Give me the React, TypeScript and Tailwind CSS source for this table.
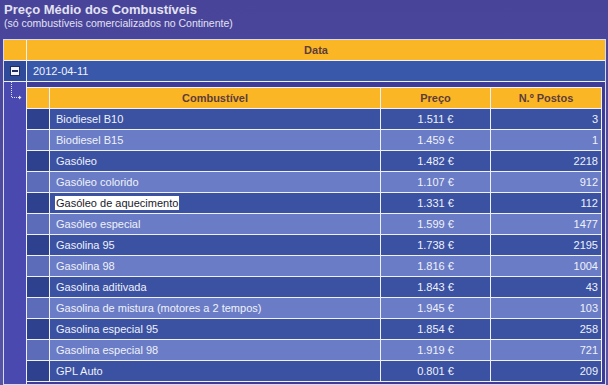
const fuels: [string, string, number][] = [
  ["Biodiesel B10", "1.511 €", 3],
  ["Biodiesel B15", "1.459 €", 1],
  ["Gasóleo", "1.482 €", 2218],
  ["Gasóleo colorido", "1.107 €", 912],
  ["Gasóleo de aquecimento", "1.331 €", 112],
  ["Gasóleo especial", "1.599 €", 1477],
  ["Gasolina 95", "1.738 €", 2195],
  ["Gasolina 98", "1.816 €", 1004],
  ["Gasolina aditivada", "1.843 €", 43],
  ["Gasolina de mistura (motores a 2 tempos)", "1.945 €", 103],
  ["Gasolina especial 95", "1.854 €", 258],
  ["Gasolina especial 98", "1.919 €", 721],
  ["GPL Auto", "0.801 €", 209],
];

function TreeLink() {
  return (
    <svg width="22" height="24" viewBox="0 0 22 24" className="block">
      <path d="M7.5 0V15.5H15" stroke="#dfe2f4" strokeWidth="1" strokeDasharray="1 1" fill="none" />
      <path d="M15 13.5L17.5 15.5L15 17.5Z" fill="#dfe2f4" />
    </svg>
  );
}

function MinusBox() {
  return (
    <div className="w-[10px] h-[10px] bg-[#f4f4f8] border border-[#1e2c66] flex items-center justify-center">
      <div className="w-[6px] h-[2px] bg-[#1e2c66]" />
    </div>
  );
}

export default function App() {
  return (
    <div
      className="w-[608px] h-[385px] overflow-hidden bg-gradient-to-b from-[#48449a] to-[#5654a6] text-[11px]"
      style={{ fontFamily: '"Liberation Sans", Arial, sans-serif' }}
    >
      {/* heading */}
      <div className="h-[39px] pl-[4px] pt-[2px] text-[#e2e2f0]">
        <div className="text-[13px] font-bold leading-[15px]">Preço Médio dos Combustíveis</div>
        <div className="text-[10.5px] leading-[12px]">(só combustíveis comercializados no Continente)</div>
      </div>

      {/* outer grid */}
      <div className="ml-[3px] w-[603px] border border-[#d6daf0] bg-[#3e3c96]">
        <div className="flex h-[21px] border-b border-[#eef0fa] bg-[#fbb626]">
          <div className="w-[23px] border-r border-[#eef0fa]" />
          <div className="flex-1 flex items-center justify-center font-bold text-[#5e3d3a]">Data</div>
        </div>

        <div className="flex h-[21px] border-b border-[#eef0fa] bg-[#3a58aa] text-[#eef2fa]">
          <div className="w-[23px] border-r border-[#eef0fa] bg-[#2f4a98] flex items-center justify-center">
            <MinusBox />
          </div>
          <div className="flex-1 flex items-center pl-[6px]">2012-04-11</div>
        </div>

        <div className="flex h-[302px]">
          <div className="w-[23px] border-r border-[#eef0fa] bg-[#4a49b0]">
            <TreeLink />
          </div>

          <div className="flex-1 pt-[5px] pr-[3px]">
            <div className="w-[575px] border-t border-r border-[#eef0fa]">
              <div className="flex h-[21px] border-b border-[#eef0fa] bg-[#fbb626] font-bold text-[#5e3d3a]">
                <div className="w-[23px] border-r border-[#eef0fa]" />
                <div className="w-[331px] border-r border-[#eef0fa] flex items-center justify-center">Combustível</div>
                <div className="w-[110px] border-r border-[#eef0fa] flex items-center justify-center">Preço</div>
                <div className="flex-1 flex items-center justify-center">N.º Postos</div>
              </div>

              {fuels.map(([name, price, count], i) => {
                const odd = i % 2 === 1;
                return (
                  <div
                    key={name}
                    className={
                      odd
                        ? "flex h-[21px] border-b border-[#eef0fa] bg-[#6b7cc6] text-[#eef2fb]"
                        : "flex h-[21px] border-b border-[#eef0fa] bg-[#3b51a2] text-[#eef2fb]"
                    }
                  >
                    <div
                      className={
                        odd
                          ? "w-[23px] border-r border-[#eef0fa] bg-[#5c6cb8]"
                          : "w-[23px] border-r border-[#eef0fa] bg-[#2e418e]"
                      }
                    />
                    <div className="w-[331px] border-r border-[#eef0fa] flex items-center pl-[5px]">
                      {name === "Gasóleo de aquecimento" ? (
                        <span className="bg-white text-[#1a1a2a] px-[1px] leading-[14px]">{name}</span>
                      ) : (
                        <span className="px-[1px]">{name}</span>
                      )}
                    </div>
                    <div className="w-[110px] border-r border-[#eef0fa] flex items-center justify-center">{price}</div>
                    <div className="flex-1 flex items-center justify-end pr-[3px]">{count}</div>
                  </div>
                );
              })}
            </div>
          </div>
        </div>
      </div>
    </div>
  );
}
